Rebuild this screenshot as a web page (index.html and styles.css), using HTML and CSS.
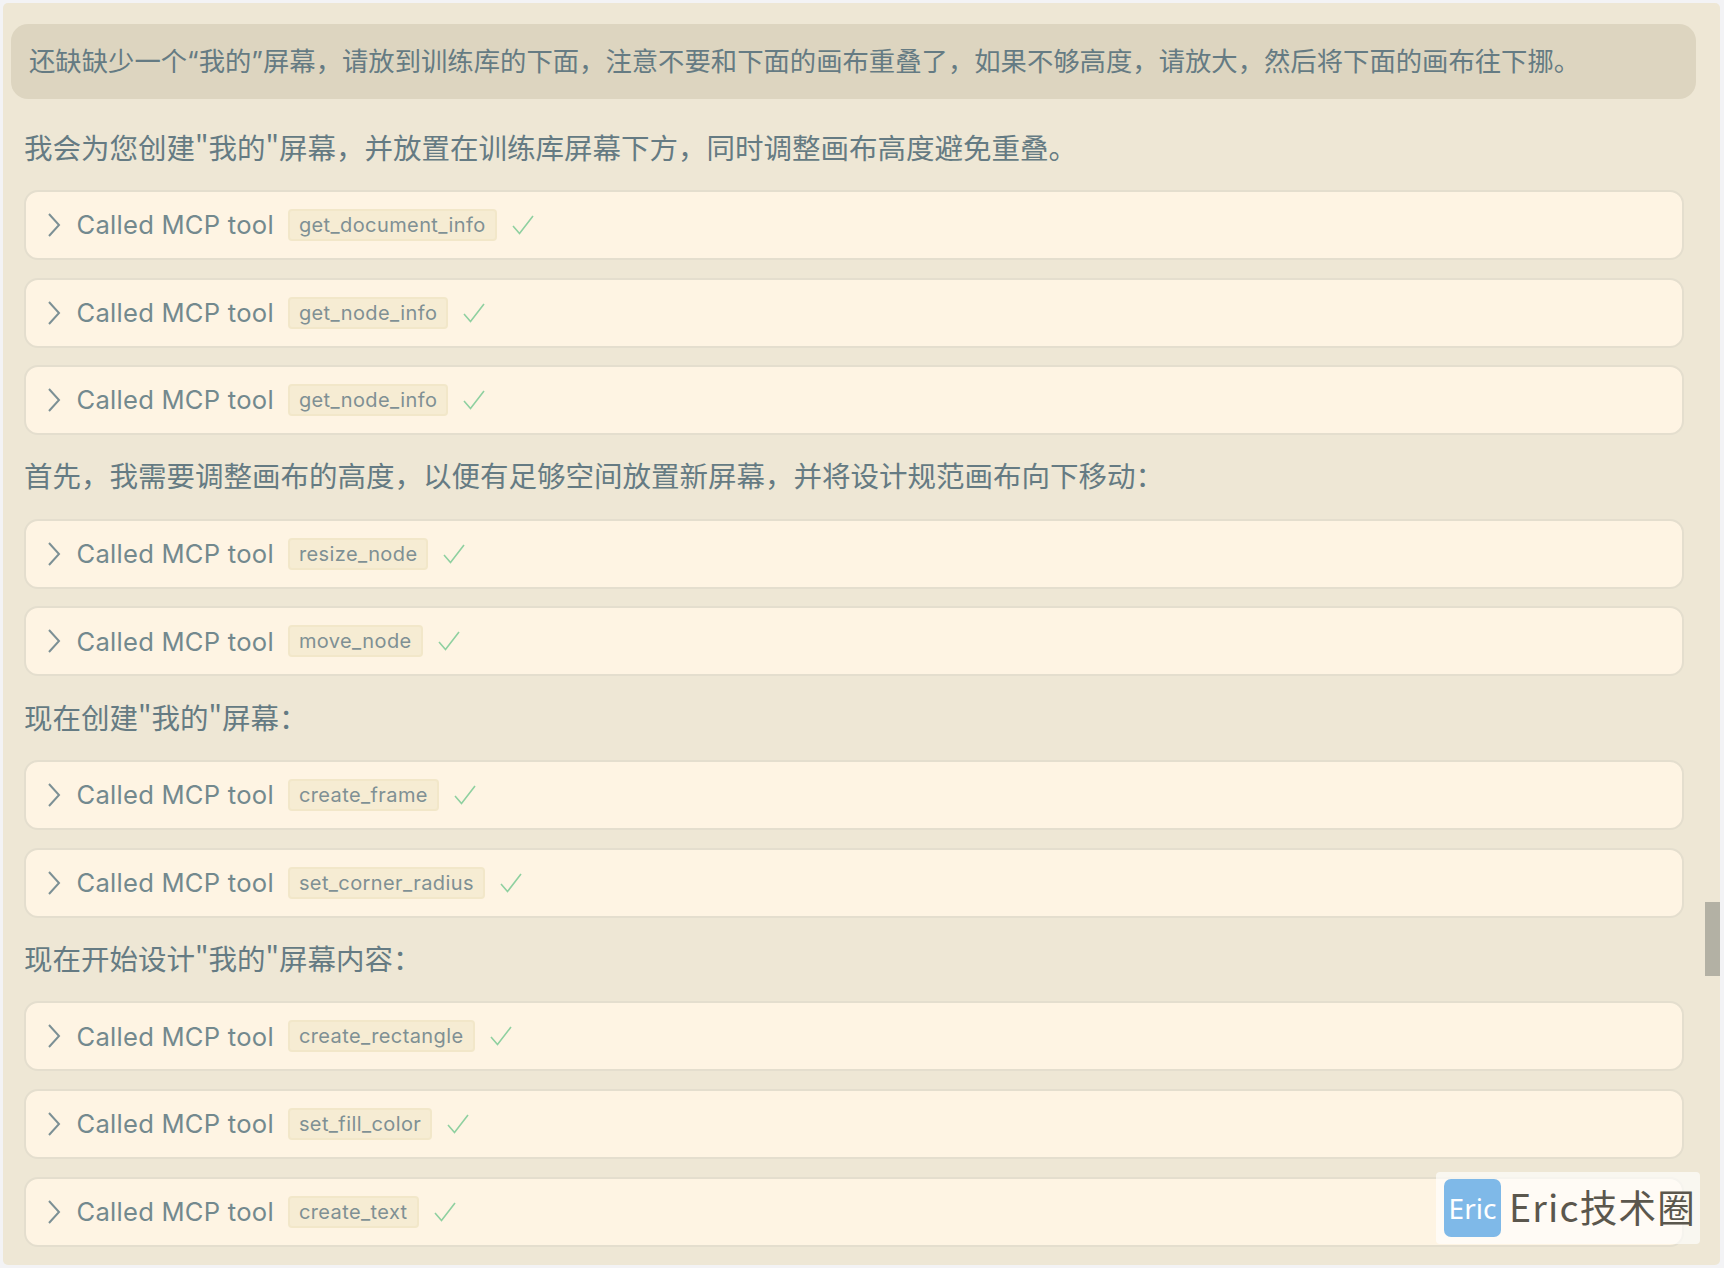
FILE: index.html
```html
<!DOCTYPE html>
<html lang="zh-CN">
<head>
<meta charset="utf-8">
<title>MCP</title>
<link rel="stylesheet" href="styles.css">
</head>
<body>
<svg class="sprite" width="0" height="0" aria-hidden="true">
  <symbol id="chev" viewBox="0 0 16 28"><path d="M3 3l10 11L3 25" fill="none" stroke="currentColor" stroke-width="2"/></symbol>
  <symbol id="tick" viewBox="0 0 24 22"><path d="M2 12l6.5 7.5L22 2" fill="none" stroke="currentColor" stroke-width="1.6"/></symbol>
</svg>
<main class="panel">
  <div class="bubble">还缺缺少一个“我的”屏幕，请放到训练库的下面，注意不要和下面的画布重叠了，如果不够高度，请放大，然后将下面的画布往下挪。</div>
  <p class="para first">我会为您创建"我的"屏幕，并放置在训练库屏幕下方，同时调整画布高度避免重叠。</p>
  <div class="group">
    <div class="card"><svg class="chev"><use href="#chev"/></svg><span class="label">Called MCP tool</span><code class="chip">get_document_info</code><svg class="tick"><use href="#tick"/></svg></div>
    <div class="card"><svg class="chev"><use href="#chev"/></svg><span class="label">Called MCP tool</span><code class="chip">get_node_info</code><svg class="tick"><use href="#tick"/></svg></div>
    <div class="card"><svg class="chev"><use href="#chev"/></svg><span class="label">Called MCP tool</span><code class="chip">get_node_info</code><svg class="tick"><use href="#tick"/></svg></div>
  </div>
  <p class="para">首先，我需要调整画布的高度，以便有足够空间放置新屏幕，并将设计规范画布向下移动：</p>
  <div class="group">
    <div class="card"><svg class="chev"><use href="#chev"/></svg><span class="label">Called MCP tool</span><code class="chip">resize_node</code><svg class="tick"><use href="#tick"/></svg></div>
    <div class="card"><svg class="chev"><use href="#chev"/></svg><span class="label">Called MCP tool</span><code class="chip">move_node</code><svg class="tick"><use href="#tick"/></svg></div>
  </div>
  <p class="para">现在创建"我的"屏幕：</p>
  <div class="group">
    <div class="card"><svg class="chev"><use href="#chev"/></svg><span class="label">Called MCP tool</span><code class="chip">create_frame</code><svg class="tick"><use href="#tick"/></svg></div>
    <div class="card"><svg class="chev"><use href="#chev"/></svg><span class="label">Called MCP tool</span><code class="chip">set_corner_radius</code><svg class="tick"><use href="#tick"/></svg></div>
  </div>
  <p class="para">现在开始设计"我的"屏幕内容：</p>
  <div class="group">
    <div class="card"><svg class="chev"><use href="#chev"/></svg><span class="label">Called MCP tool</span><code class="chip">create_rectangle</code><svg class="tick"><use href="#tick"/></svg></div>
    <div class="card"><svg class="chev"><use href="#chev"/></svg><span class="label">Called MCP tool</span><code class="chip">set_fill_color</code><svg class="tick"><use href="#tick"/></svg></div>
    <div class="card"><svg class="chev"><use href="#chev"/></svg><span class="label">Called MCP tool</span><code class="chip">create_text</code><svg class="tick"><use href="#tick"/></svg></div>
  </div>
  <div class="scrollbar"></div>
  <div class="mark"><span class="mark-icon">Eric</span><span class="mark-name">Eric技术圈</span></div>
</main>
</body>
</html>
```
FILE: styles.css
```css
* { box-sizing: border-box; }
html, body { margin: 0; height: 100%; background: #f3f3f5; overflow: hidden; }
.sprite { position: absolute; }
.panel {
  position: relative;
  margin: 3px 4px 0 3px;
  height: 1262px;
  padding: 21px 24px 0 8px;
  background: #eee7d5;
  border-radius: 5px;
  color: #657b83;
  font-family: Inter, "Noto Sans CJK SC", sans-serif;
  overflow: hidden;
}
.bubble {
  height: 75px;
  padding: 0 18px 4px;
  display: flex;
  align-items: center;
  background: #ddd5c0;
  border-radius: 17px;
  font-family: Inter, "Noto Sans CJK SC", sans-serif;
  font-size: 26.35px;
  white-space: nowrap;
}
.para {
  margin: 20.3px 0 23.4px 13px;
  height: 40px;
  line-height: 40px;
  font-family: "Noto Sans CJK SC", sans-serif;
  font-size: 28.5px;
  white-space: nowrap;
}
.para.first { margin-top: 28px; margin-bottom: 23px; }
.group { display: flex; flex-direction: column; gap: 17.6px; margin: 0 12px 0 13px; }
.card {
  height: 70px;
  display: flex;
  align-items: center;
  padding-left: 20px;
  background: #fef4e3;
  border: 2px solid #e4dece;
  border-radius: 14px;
}
.chev { width: 16px; height: 28px; color: #7c9095; flex: none; }
.label {
  margin-left: 14.5px;
  font-size: 25.6px;
  letter-spacing: 0.25px;
  line-height: 1;
  color: #73898e;
}
.chip {
  margin-left: 14px;
  height: 32px;
  padding: 0 9px;
  display: flex;
  align-items: center;
  background: #f6ecd3;
  border: 2px solid #f2e7c9;
  border-radius: 4px;
  font-family: Inter, sans-serif;
  font-size: 20px;
  letter-spacing: 0.4px;
  color: #7f9094;
}
.tick { margin-left: 14px; width: 24px; height: 22px; color: #8fd0a0; flex: none; }
.scrollbar {
  position: absolute;
  top: 899px;
  right: 0;
  width: 15px;
  height: 74px;
  background: #b3b1a4;
}
.mark {
  position: absolute;
  left: 1433px;
  top: 1169px;
  width: 264px;
  height: 72px;
  display: flex;
  align-items: center;
  gap: 8px;
  padding-left: 8px;
  background: rgba(255, 255, 255, 0.65);
  border-radius: 4px;
}
.mark-icon {
  width: 57px;
  height: 58px;
  display: flex;
  align-items: center;
  justify-content: center;
  background: #7fb9e8;
  border-radius: 7px;
  color: #fff;
  font-family: "Noto Sans", sans-serif;
  font-size: 28px;
}
.mark-name {
  padding-bottom: 6px;
  font-family: "Noto Sans CJK SC", sans-serif;
  font-weight: 400;
  font-size: 37.5px;
  letter-spacing: 1.2px;
  color: #5b574d;
  white-space: nowrap;
}
```
